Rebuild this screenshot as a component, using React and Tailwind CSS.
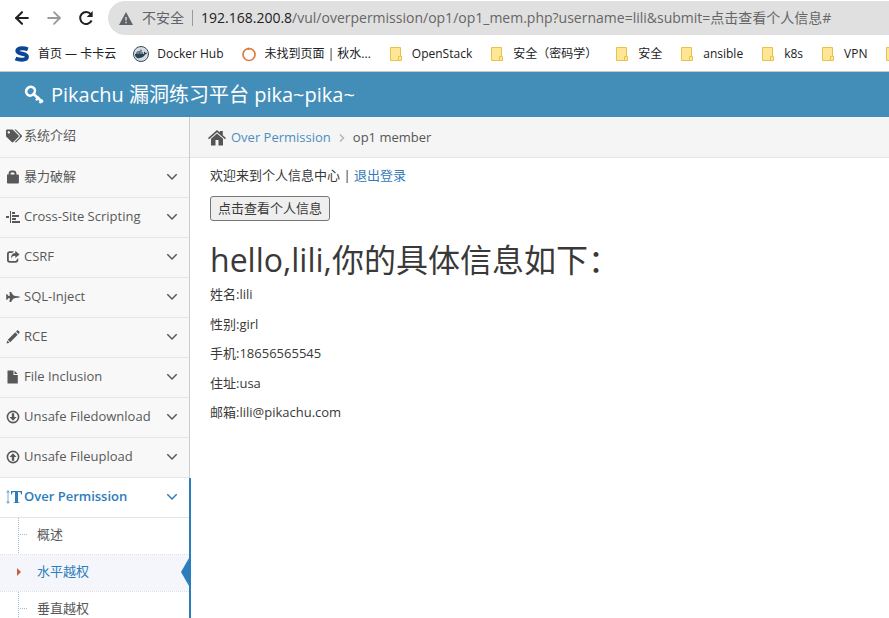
import React from "react";
import { FaTags, FaFighterJet, FaDocker } from "react-icons/fa";
import { ArrowLeft, ArrowRight } from "lucide-react";

function Svg({ children, className = "size-[14px]", box = "0 0 14 14" }) {
  return (
    <svg viewBox={box} className={className} fill="currentColor" aria-hidden="true">
      {children}
    </svg>
  );
}

const LockIcon = () => (
  <Svg>
    <path d="M1 4.500h1.600V3.500A3 3 0 0 1 5.600.500h1.800a3 3 0 0 1 3 3v1H12a.9.9 0 0 1 .9.9v7.200a.9.9 0 0 1-.9.9H1.900a.9.9 0 0 1-.9-.9V5.400zM4.600 4.500h3.900V3.500a1 1 0 0 0-1-1H5.600a1 1 0 0 0-1 1z" />
  </Svg>
);
const AlignIcon = () => (
  <Svg>
    <path d="M0 6h3v2H0zM4 1h1v12H4zM6 2h3v2H6zM6 5h7v2H6zM6 8h4v2H6zM6 11h8v2H6z" />
  </Svg>
);
const ShareIcon = () => (
  <Svg>
    <path d="M8 1.200H3.800A2.800 2.800 0 0 0 1 4v6a2.800 2.800 0 0 0 2.800 2.800h5.700A2.800 2.800 0 0 0 12.300 10V8.200l-1.800 1.500v.3a1 1 0 0 1-1 1H3.800a1 1 0 0 1-1-1V4a1 1 0 0 1 1-1h2.400z" />
    <path d="M9.300.800 13.600 4.400 9.300 8V5.800C7.300 5.800 6 6.500 5 8.400c0-3.300 1.500-5.200 4.300-5.400z" />
  </Svg>
);
const PencilIcon = () => (
  <Svg>
    <path d="M9.300 2.300 11.700 4.700 4.200 12.200 1.800 9.800zM10 1.600 11 .600a1 1 0 0 1 1.300 0l1.100 1.100a1 1 0 0 1 0 1.300l-1 1zM1.300 10.500 3.500 12.700.500 13.500z" />
  </Svg>
);
const FileIcon = () => (
  <Svg>
    <path d="M1.500.500h6v4.600h4.300V13.500H1.500zM8.500.700l3.200 3.400H8.500z" />
  </Svg>
);
const CircleDownIcon = () => (
  <Svg>
    <circle cx="7" cy="7" r="5.600" fill="none" stroke="currentColor" strokeWidth="1.600" />
    <path d="M5.800 3.200h2.400V7h2.300L7 10.700 3.500 7h2.300z" />
  </Svg>
);
const CircleUpIcon = () => (
  <Svg>
    <circle cx="7" cy="7" r="5.600" fill="none" stroke="currentColor" strokeWidth="1.600" />
    <path d="M5.800 10.700h2.400V7h2.300L7 3.200 3.500 7h2.300z" />
  </Svg>
);
const TextHeightIcon = () => (
  <Svg className="h-[14px] w-4" box="0 0 16 14">
    <path d="M2 0 4 2.500H2.500v9H4L2 14 0 11.500h1.500v-9H0z" opacity=".65" />
    <path d="M5 1h11v3.500h-.8C15 2.800 14.500 2 13 2h-1v9.500c0 .8.400 1 1.500 1v.5h-6v-.5c1.100 0 1.500-.2 1.500-1V2H8c-1.500 0-2 .8-2.200 2.500H5z" />
  </Svg>
);
const KeyIcon = () => (
  <Svg className="size-5" box="0 0 20 20">
    <g fill="none" stroke="currentColor">
      <ellipse cx="6.500" cy="6.200" rx="4.600" ry="4.200" strokeWidth="2.600" transform="rotate(-45 6.500 6.200)" />
      <path d="m9.800 9.300 9 8" strokeWidth="2.600" />
      <path d="m12 15.300 3-3.300M15.500 18l3-3.200" strokeWidth="2.200" />
    </g>
  </Svg>
);
const HomeIcon = () => (
  <Svg className="h-4 w-[18px]" box="0 0 18 16">
    <path d="M9 0 11.800 2.500V1h3v4.200L18 8l-1 1.200L9 2.300 1 9.200 0 8z" />
    <path d="m9 3.600 6 5.200V15.500h-4.500V10h-3v5.500H3V8.800z" />
  </Svg>
);
const ChevronDown = () => (
  <svg viewBox="0 0 12 8" className="h-2 w-3" fill="none" stroke="currentColor" strokeWidth="1.500" aria-hidden="true">
    <path d="m1.300 1.300 4.700 4.700 4.700-4.700" />
  </svg>
);
const Folder = () => (
  <svg viewBox="0 0 16 16" className="size-4" aria-hidden="true">
    <path d="M2.500 1.500h10v9h1v4h-11z" fill="#ffe694" stroke="#e8c24a" />
    <path d="M10.500 14v-3.500h2" fill="none" stroke="#e8c24a" />
  </svg>
);
const SLogo = () => (
  <svg viewBox="0 0 16 16" className="size-4" fill="none" stroke="#0b4596" strokeWidth="4" aria-hidden="true">
    <path d="M13.800 3.300C12 2.600 10 2.300 8 2.300 5 2.300 3.300 3.200 3.300 4.800c0 4 9.600 2 9.600 6 0 1.900-2 2.900-5 2.900-2.400 0-4.600-.4-6.400-1.200" />
  </svg>
);
const DockerLogo = () => (
  <span className="flex size-4 items-center justify-center rounded-full border border-[#384d5b] bg-[#d5dde2] text-[#2b4253]">
    <FaDocker className="size-3" />
  </span>
);
const RingLogo = () => (
  <svg viewBox="0 0 16 16" className="size-4" fill="none" stroke="#e0793a" aria-hidden="true">
    <circle cx="8" cy="8.500" r="6" strokeWidth="1.700" />
    <path d="m6.500 2.500 2 .8" strokeWidth="2" />
  </svg>
);

const bookmarks = [
  { label: "首页 — 卡卡云", icon: <SLogo /> },
  { label: "Docker Hub", icon: <DockerLogo /> },
  { label: "未找到页面 | 秋水...", icon: <RingLogo /> },
  { label: "OpenStack", icon: <Folder /> },
  { label: "安全（密码学）", icon: <Folder /> },
  { label: "安全", icon: <Folder /> },
  { label: "ansible", icon: <Folder /> },
  { label: "k8s", icon: <Folder /> },
  { label: "VPN", icon: <Folder /> },
  { label: "", icon: <Folder /> },
];

const menu = [
  { label: "系统介绍", icon: <FaTags className="h-[14px] w-4" />, leaf: true },
  { label: "暴力破解", icon: <LockIcon /> },
  { label: "Cross-Site Scripting", icon: <AlignIcon /> },
  { label: "CSRF", icon: <ShareIcon /> },
  { label: "SQL-Inject", icon: <FaFighterJet className="size-[14px]" /> },
  { label: "RCE", icon: <PencilIcon /> },
  { label: "File Inclusion", icon: <FileIcon /> },
  { label: "Unsafe Filedownload", icon: <CircleDownIcon /> },
  { label: "Unsafe Fileupload", icon: <CircleUpIcon /> },
];

const submenu = [
  { label: "概述" },
  { label: "水平越权", current: true },
  { label: "垂直越权" },
];

const profile = ["姓名:lili", "性别:girl", "手机:18656565545", "住址:usa", "邮箱:lili@pikachu.com"];

function BrowserBar() {
  return (
    <div className="border-b border-[#c8c8c8] bg-white">
      <div className="flex h-[36px] items-center pl-[14px] text-[#202124]">
        <button type="button" aria-label="Back" className="mr-4 flex size-4 items-center">
          <ArrowLeft className="size-4 scale-125" strokeWidth={2.5} />
        </button>
        <button type="button" aria-label="Forward" className="mr-4 flex size-4 items-center text-[#9a9a9a]">
          <ArrowRight className="size-4 scale-125" strokeWidth={2.2} />
        </button>
        <button type="button" aria-label="Reload" className="mr-[14px] flex size-4 items-center">
          <svg viewBox="0 0 16 16" className="size-4" fill="none" stroke="currentColor" strokeWidth="2" aria-hidden="true">
            <path d="M13.600 10.500A6 6 0 1 1 12.800 4.200" />
            <path d="M14.700 1v6H8.700z" fill="currentColor" stroke="none" />
          </svg>
        </button>
        <div className="flex h-[34px] min-w-0 flex-1 items-center rounded-l-full bg-[#e0e0e0] pl-[11px] text-sm">
          <svg viewBox="0 0 14 13" className="h-[13px] w-[14px] shrink-0" aria-hidden="true">
            <path d="M7 0 14 13H0z" fill="#5f6368" />
            <path d="M6.300 5h1.400v3.500H6.300zM6.300 9.800h1.400v1.400H6.300z" fill="#e0e0e0" />
          </svg>
          <span className="ml-[9px] shrink-0 text-[#5f6368]">不安全</span>
          <span className="mx-2 h-4 w-px shrink-0 bg-[#9a9a9a]" />
          <label htmlFor="address" className="shrink-0 text-[#202124]">192.168.200.8</label>
          <input
            id="address"
            type="text"
            className="min-w-0 flex-1 bg-transparent text-[#666666] outline-none"
            defaultValue="/vul/overpermission/op1/op1_mem.php?username=lili&submit=点击查看个人信息#"
          />
        </div>
      </div>
      <nav className="flex h-[35px] items-center gap-[17px] overflow-hidden pl-[14px] text-xs text-[#202124]">
        {bookmarks.map((b, i) => (
          <a key={i} href="#" aria-label={b.label || "Folder"} className="flex shrink-0 items-center gap-2 whitespace-nowrap">
            <span className="shrink-0">{b.icon}</span>
            {b.label && <span>{b.label}</span>}
          </a>
        ))}
      </nav>
    </div>
  );
}

function Sidebar() {
  return (
    <aside className="w-[190px] shrink-0 border-r border-[#cccccc] bg-[#f8f8f8] text-[13px] text-[#585858]">
      <ul>
        {menu.map((m) => (
          <li key={m.label} className="border-b border-[#e5e5e5] first:h-[41px]">
            <a href="#" className="flex h-[39px] items-center pr-[11px] pb-[2px] pl-[6px]">
              <span className="flex w-[18px] shrink-0">{m.icon}</span>
              <span className="flex-1 whitespace-nowrap">{m.label}</span>
              {!m.leaf && <ChevronDown />}
            </a>
          </li>
        ))}
        <li className="relative bg-white">
          <span className="absolute inset-y-0 -right-[2px] w-[2px] bg-[#2b7dbc]" />
          <a href="#" className="flex h-10 items-center border-b border-[#e5e5e5] pr-[11px] pb-[2px] pl-[6px] font-semibold text-[#2b7dbc]">
            <span className="flex w-[18px] shrink-0"><TextHeightIcon /></span>
            <span className="flex-1 whitespace-nowrap">Over Permission</span>
            <ChevronDown />
          </a>
          <ul className="relative">
            <span className="absolute inset-y-0 left-[18px] border-l border-dotted border-[#9dbdd6]" />
            {submenu.map((s) => (
              <li key={s.label} className="relative border-b border-dotted border-[#e0e0e0]">
                {s.current ? (
                  <a href="#" aria-current="page" className="flex h-9 items-center bg-[#f4f6fb] pb-[3px] pl-[37px] text-[#2b7dbc]">
                    <svg viewBox="0 0 5 12" className="absolute left-4 h-3 w-[5px]" aria-hidden="true">
                      <path d="M0 0h5v12H0z" fill="#f4f6fb" />
                      <path d="M1 2v8l4-4z" fill="#c86139" />
                    </svg>
                    {s.label}
                    <svg viewBox="0 0 9 28" className="absolute right-0 h-7 w-2" preserveAspectRatio="none" aria-hidden="true">
                      <path d="M9 0v28L0 14z" fill="#2b7dbc" />
                    </svg>
                  </a>
                ) : (
                  <a href="#" className="flex h-9 items-center pb-[3px] pl-[37px]">
                    <span className="absolute left-5 w-[7px] border-t border-dotted border-[#9dbdd6]" />
                    {s.label}
                  </a>
                )}
              </li>
            ))}
          </ul>
        </li>
      </ul>
    </aside>
  );
}

export default function App() {
  return (
    <div className="flex h-screen flex-col overflow-hidden bg-white font-['Open_Sans','Noto_Sans_CJK_SC',sans-serif] text-[13px] text-[#393939]">
      <BrowserBar />
      <header className="flex h-[45px] shrink-0 items-center gap-[7px] bg-[#438eb9] pl-6 text-xl text-white">
        <KeyIcon />
        <a href="#" className="whitespace-nowrap">Pikachu 漏洞练习平台 pika~pika~</a>
      </header>
      <div className="flex min-h-0 flex-1">
        <Sidebar />
        <main className="min-w-0 flex-1">
          <nav className="flex h-[41px] items-center border-b border-[#e5e5e5] bg-[#f5f5f5] pt-px pl-[18px] text-[#555555]">
            <HomeIcon />
            <a href="#" className="ml-[5px] text-[#4c8fbd]">Over Permission</a>
            <svg viewBox="0 0 6 8" className="mx-2 h-2 w-[6px]" fill="none" stroke="#b2b6bf" strokeWidth="1.500" aria-hidden="true">
              <path d="m1 0.500 3.500 3.500L1 7.500" />
            </svg>
            <span>op1 member</span>
          </nav>
          <div className="px-5 pt-[7px]">
            <p className="leading-5">
              欢迎来到个人信息中心 | <a href="#" className="text-[#337ab7]">退出登录</a>
            </p>
            <button type="button" className="mt-[11px] block h-[25px] rounded-[3px] border border-[#767676] bg-[#efefef] px-[7px] pb-[2px] leading-5">
              点击查看个人信息
            </button>
            <h1 className="mt-[15px] text-[32px] leading-[48px] font-normal">hello,lili,你的具体信息如下：</h1>
            <div className="mt-px flex flex-col gap-[10px] leading-normal">
              {profile.map((line) => (
                <p key={line}>{line}</p>
              ))}
            </div>
          </div>
        </main>
      </div>
    </div>
  );
}
